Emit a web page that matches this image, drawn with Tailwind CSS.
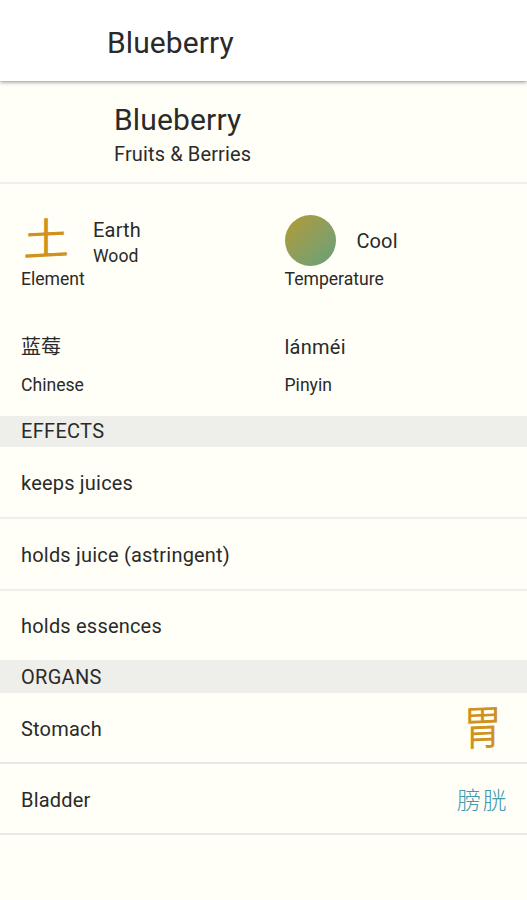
<!DOCTYPE html>
<html lang="en">
<head>
    <meta charset="UTF-8">
    <meta name="viewport" content="width=device-width, initial-scale=1.0">
    <title>Blueberry</title>
    <script src="https://cdn.jsdelivr.net/npm/@tailwindcss/browser@4"></script>
</head>
<body class="min-h-screen bg-[#fffff7] text-[#2a2a2a] font-[Roboto,'Noto_Sans_CJK_SC',sans-serif]">
    <!-- App bar -->
    <header class="relative h-[81px] bg-white pl-[107px] pt-[25px] shadow-[0_1px_4px_rgba(0,0,0,0.45)]">
        <h1 class="text-[30px] leading-9 tracking-[0.1px]">Blueberry</h1>
    </header>

    <!-- Title -->
    <div class="h-[103px] border-b-2 border-[#efefeb] pl-[114px] pt-[21px]">
        <h2 class="text-[30px] leading-9 tracking-[0.15px]">Blueberry</h2>
        <p class="text-[20px] leading-6 mt-1 tracking-[0.13px]">Fruits &amp; Berries</p>
    </div>

    <!-- Properties -->
    <div class="grid grid-cols-2 h-[232px] grid-rows-[130px_102px]">
        <div class="pl-[21px] pt-[31px]">
            <div class="flex h-[52px]">
                <div class="w-[72px] pl-[3px] text-[44px] leading-[50px] text-[#cf9220]" lang="zh">
                    <span class="inline-block -skew-y-3 scale-x-105">土</span>
                </div>
                <div class="pt-px">
                    <p class="text-[20px] leading-7 tracking-[0.2px]">Earth</p>
                    <p class="text-[17.6px] leading-6">Wood</p>
                </div>
            </div>
            <p class="text-[17.6px] leading-6">Element</p>
        </div>
        <div class="pl-[21px] pt-[30px]">
            <div class="flex h-[53px] items-start">
                <div class="mt-px size-[51px] rounded-full bg-linear-to-br from-[#b29a2c] to-[#62a07c]"></div>
                <p class="ml-[21px] mt-[13px] text-[20px] leading-7 tracking-[0.1px]">Cool</p>
            </div>
            <p class="text-[17.6px] leading-6">Temperature</p>
        </div>
        <div class="pl-[21px] pt-[19px]">
            <p class="text-[20px] leading-7" lang="zh">蓝莓</p>
            <p class="text-[17.6px] leading-6 mt-3">Chinese</p>
        </div>
        <div class="pl-[21px] pt-[19px]">
            <p class="text-[20px] leading-7 tracking-[0.25px]">lánméi</p>
            <p class="text-[17.6px] leading-6 mt-3">Pinyin</p>
        </div>
    </div>

    <!-- Effects -->
    <h3 class="h-[31px] bg-[#eeeeea] pl-[21px] text-[20px] leading-[30px] tracking-[0.3px]">EFFECTS</h3>
    <ul class="text-[20px] tracking-[0.2px]">
        <li class="flex h-[72px] items-center border-b-2 border-[#efefeb] pl-[21px] pt-[2px]">keeps juices</li>
        <li class="flex h-[72px] items-center border-b-2 border-[#efefeb] pl-[21px] pt-px">holds juice (astringent)</li>
        <li class="flex h-[69px] items-center pl-[21px]">holds essences</li>
    </ul>

    <!-- Organs -->
    <h3 class="h-[33px] bg-[#eeeeea] pl-[21px] text-[20px] leading-[34px] tracking-[0.3px]">ORGANS</h3>
    <ul class="text-[20px] tracking-[0.2px]">
        <li class="flex h-[71px] items-center justify-between border-b-2 border-[#e9e9e5] pl-[21px] pr-[22px] pt-[2px]">
            <span>Stomach</span>
            <span class="inline-block -skew-y-2 scale-x-[0.85] scale-y-105 text-[45px] leading-[45px] text-[#cf9220]" lang="zh">胃</span>
        </li>
        <li class="flex h-[71px] items-center justify-between border-b-2 border-[#e9e9e5] pl-[21px] pr-[19px] pt-[2px]">
            <span>Bladder</span>
            <span class="pt-[3px] text-[24px] leading-6 tracking-[1.5px] font-light text-[#4299ae]" lang="zh">膀胱</span>
        </li>
    </ul>
</body>
</html>
